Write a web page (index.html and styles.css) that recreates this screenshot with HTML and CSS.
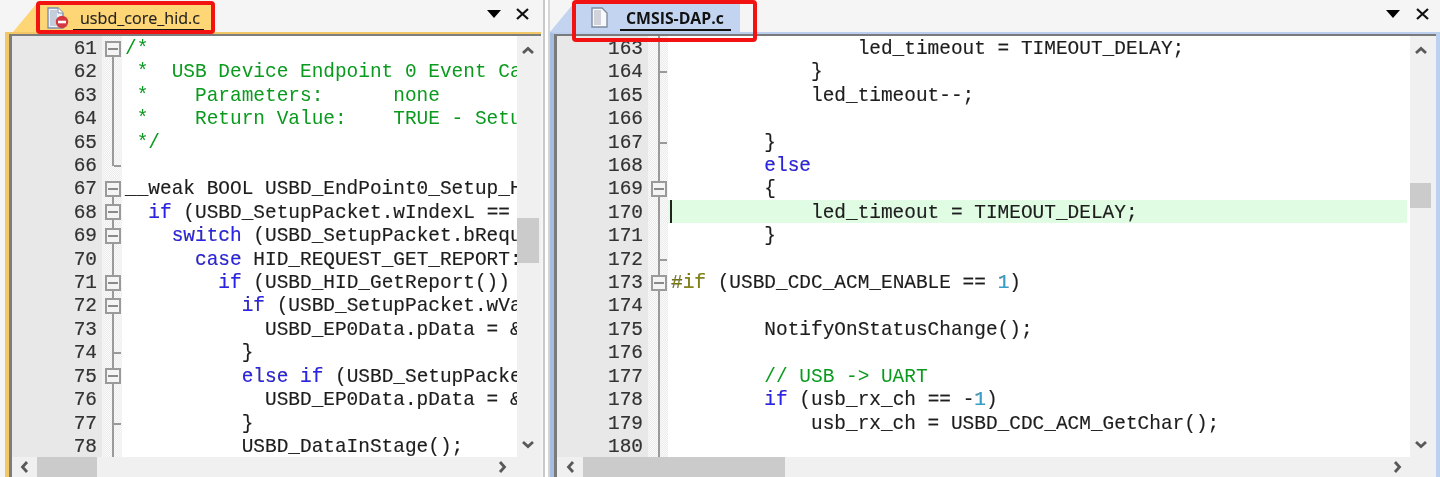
FILE: index.html
```html
<!DOCTYPE html>
<html lang="en">
<head>
<meta charset="utf-8">
<title>Keil editor panes</title>
<link rel="stylesheet" href="styles.css">
</head>
<body>
<div class="app">
  <section class="pane pane-left">
    <header class="strip">
      <div class="tab tab-left">
        <svg class="file-icon" width="22" height="22" viewBox="0 0 22 22"><path d="M1 1h10l5 5v15H1z" fill="#eef1f6" stroke="#7f8fae" stroke-width="1.4"/><path d="M3 3h7v16H3z" fill="#c6cdda"/><path d="M11 1v5h5" fill="#fff" stroke="#7f8fae"/><circle cx="15" cy="15" r="6.2" fill="#d4373f"/><rect x="11" y="13.7" width="8" height="2.6" fill="#fff"/></svg>
        <span class="tab-name">usbd_core_hid.c</span>
      </div>
      <div class="tools">
        <svg class="tool-down" width="14" height="8" viewBox="0 0 14 8"><path d="M0 0h14L7 8z" fill="#000"/></svg>
        <svg class="tool-x" width="13" height="12" viewBox="0 0 13 12"><path d="M1 1l11 10M12 1L1 11" stroke="#111" stroke-width="2.2" fill="none"/></svg>
      </div>
    </header>
    <div class="frame frame-left">
      <div class="body">
        <div class="editor">
          <div class="row"><span class="num">61</span><span class="fold box first"></span><code class="c g">/*</code></div>
          <div class="row"><span class="num">62</span><span class="fold line"></span><code class="c g"> *  USB Device Endpoint 0 Event Callback</code></div>
          <div class="row"><span class="num">63</span><span class="fold line"></span><code class="c g"> *    Parameters:      none</code></div>
          <div class="row"><span class="num">64</span><span class="fold line"></span><code class="c g"> *    Return Value:    TRUE - Setup</code></div>
          <div class="row"><span class="num">65</span><span class="fold line"></span><code class="c g"> */</code></div>
          <div class="row"><span class="num">66</span><span class="fold end"></span><code class="c"></code></div>
          <div class="row"><span class="num">67</span><span class="fold box first"></span><code class="c">__weak BOOL USBD_EndPoint0_Setup_HID</code></div>
          <div class="row"><span class="num">68</span><span class="fold box"></span><code class="c">  <b>if</b> (USBD_SetupPacket.wIndexL == x</code></div>
          <div class="row"><span class="num">69</span><span class="fold box"></span><code class="c">    <b>switch</b> (USBD_SetupPacket.bRequest</code></div>
          <div class="row"><span class="num">70</span><span class="fold line"></span><code class="c">      <b>case</b> HID_REQUEST_GET_REPORT:</code></div>
          <div class="row"><span class="num">71</span><span class="fold box"></span><code class="c">        <b>if</b> (USBD_HID_GetReport()) {</code></div>
          <div class="row"><span class="num">72</span><span class="fold box"></span><code class="c">          <b>if</b> (USBD_SetupPacket.wValue</code></div>
          <div class="row"><span class="num">73</span><span class="fold line"></span><code class="c">            USBD_EP0Data.pData = &amp;</code></div>
          <div class="row"><span class="num">74</span><span class="fold tick"></span><code class="c">          }</code></div>
          <div class="row"><span class="num">75</span><span class="fold box"></span><code class="c">          <b>else if</b> (USBD_SetupPacket.w</code></div>
          <div class="row"><span class="num">76</span><span class="fold line"></span><code class="c">            USBD_EP0Data.pData = &amp;</code></div>
          <div class="row"><span class="num">77</span><span class="fold tick"></span><code class="c">          }</code></div>
          <div class="row"><span class="num">78</span><span class="fold line"></span><code class="c">          USBD_DataInStage();</code></div>
        </div>
        <div class="vbar vbar-left">
          <svg class="chev" width="14" height="9" viewBox="0 0 14 9"><path d="M2 7l5-4.5L12 7" stroke="#595959" stroke-width="2.8" fill="none"/></svg>
          <div class="vtrack"><div class="vthumb vthumb-left"></div></div>
          <svg class="chev" width="14" height="9" viewBox="0 0 14 9"><path d="M2 2l5 4.5L12 2" stroke="#595959" stroke-width="2.8" fill="none"/></svg>
        </div>
      </div>
      <div class="hbar hbar-left">
        <svg class="chev-h" width="9" height="14" viewBox="0 0 9 14"><path d="M7 2L2.5 7 7 12" stroke="#595959" stroke-width="2.8" fill="none"/></svg>
        <div class="htrack"><div class="hthumb hthumb-left"></div></div>
        <svg class="chev-h" width="9" height="14" viewBox="0 0 9 14"><path d="M2 2l4.5 5L2 12" stroke="#595959" stroke-width="2.8" fill="none"/></svg>
      </div>
    </div>
    <div class="mark mark-left"></div>
  </section>

  <section class="pane pane-right">
    <header class="strip">
      <div class="tab tab-right">
        <svg class="file-icon" width="18" height="21" viewBox="0 0 18 21"><path d="M1 1h10l5 5v14H1z" fill="#f8f9fb" stroke="#7f8ca3" stroke-width="1.4"/><path d="M3 3h7v15H3z" fill="#d0d4da"/></svg>
        <span class="tab-name tab-name-active">CMSIS-DAP.c</span>
      </div>
      <div class="tools">
        <svg class="tool-down" width="14" height="8" viewBox="0 0 14 8"><path d="M0 0h14L7 8z" fill="#000"/></svg>
        <svg class="tool-x" width="13" height="12" viewBox="0 0 13 12"><path d="M1 1l11 10M12 1L1 11" stroke="#111" stroke-width="2.2" fill="none"/></svg>
      </div>
    </header>
    <div class="frame frame-right">
      <div class="body">
        <div class="editor">
          <div class="row"><span class="num">163</span><span class="fold line"></span><code class="c">                led_timeout = TIMEOUT_DELAY;</code></div>
          <div class="row"><span class="num">164</span><span class="fold tick"></span><code class="c">            }</code></div>
          <div class="row"><span class="num">165</span><span class="fold line"></span><code class="c">            led_timeout--;</code></div>
          <div class="row"><span class="num">166</span><span class="fold line"></span><code class="c"></code></div>
          <div class="row"><span class="num">167</span><span class="fold tick"></span><code class="c">        }</code></div>
          <div class="row"><span class="num">168</span><span class="fold line"></span><code class="c">        <b>else</b></code></div>
          <div class="row"><span class="num">169</span><span class="fold box"></span><code class="c">        {</code></div>
          <div class="row row-current"><span class="num">170</span><span class="fold line"></span><code class="c">            led_timeout = TIMEOUT_DELAY;</code></div>
          <div class="row"><span class="num">171</span><span class="fold line"></span><code class="c">        }</code></div>
          <div class="row"><span class="num">172</span><span class="fold tick"></span><code class="c"></code></div>
          <div class="row"><span class="num">173</span><span class="fold box"></span><code class="c"><i>#if</i> (USBD_CDC_ACM_ENABLE == <u>1</u>)</code></div>
          <div class="row"><span class="num">174</span><span class="fold line"></span><code class="c"></code></div>
          <div class="row"><span class="num">175</span><span class="fold line"></span><code class="c">        NotifyOnStatusChange();</code></div>
          <div class="row"><span class="num">176</span><span class="fold line"></span><code class="c"></code></div>
          <div class="row"><span class="num">177</span><span class="fold line"></span><code class="c g">        // USB -&gt; UART</code></div>
          <div class="row"><span class="num">178</span><span class="fold line"></span><code class="c">        <b>if</b> (usb_rx_ch == -<u>1</u>)</code></div>
          <div class="row"><span class="num">179</span><span class="fold line"></span><code class="c">            usb_rx_ch = USBD_CDC_ACM_GetChar();</code></div>
          <div class="row"><span class="num">180</span><span class="fold line"></span><code class="c"></code></div>
        </div>
        <div class="vbar vbar-right">
          <svg class="chev" width="14" height="9" viewBox="0 0 14 9"><path d="M2 7l5-4.5L12 7" stroke="#595959" stroke-width="2.8" fill="none"/></svg>
          <div class="vtrack"><div class="vthumb vthumb-right"></div></div>
          <svg class="chev" width="14" height="9" viewBox="0 0 14 9"><path d="M2 2l5 4.5L12 2" stroke="#595959" stroke-width="2.8" fill="none"/></svg>
        </div>
      </div>
      <div class="hbar hbar-right">
        <svg class="chev-h" width="9" height="14" viewBox="0 0 9 14"><path d="M7 2L2.5 7 7 12" stroke="#595959" stroke-width="2.8" fill="none"/></svg>
        <div class="htrack"><div class="hthumb hthumb-right"></div></div>
        <svg class="chev-h" width="9" height="14" viewBox="0 0 9 14"><path d="M2 2l4.5 5L2 12" stroke="#595959" stroke-width="2.8" fill="none"/></svg>
      </div>
    </div>
    <div class="mark mark-right"></div>
  </section>
</div>
</body>
</html>
```
FILE: styles.css
```css
*, *::before, *::after { box-sizing: border-box; }
html, body { margin: 0; height: 100%; overflow: hidden; background: #fff; }
.app { display: flex; height: 477px; width: 1440px; filter: blur(0.5px); }

.pane { position: relative; display: flex; flex-direction: column; height: 477px; background: #f5f5f5; }
.pane-left { width: 545px; border-right: 2px solid #c9c9c9; }
.pane-right { margin-left: 3px; border-left: 2px solid #d5d5d5; flex: 1; min-width: 0; }

.strip { height: 32px; flex: none; display: flex; justify-content: space-between; align-items: flex-end; }
.tab { height: 29px; display: flex; align-items: center; clip-path: polygon(0 100%, 24px 0, 100% 0, 100% 100%); font-family: "Open Sans", "Noto Sans", sans-serif; }
.tab-left { width: 202px; margin-left: 13px; background: #ffd675; padding-left: 34px; }
.tab-right { width: 190px; background: #c3d4f1; padding-left: 41px; }
.file-icon { flex: none; }
.tab-name { font-size: 16.1px; color: #222; margin-left: 4px; border-bottom: 2px solid #111; line-height: 22px; padding: 0 4px 0 7px; position: relative; top: 1px; -webkit-text-stroke: 0.15px #222; }
.tab-name-active { font-weight: 700; color: #111; margin-left: 11px; font-size: 15.8px; padding: 0 7px 0 6px; -webkit-text-stroke: 0; }

.tools { display: flex; align-items: center; gap: 15px; height: 32px; padding-bottom: 4px; }
.pane-left .tools { padding-right: 14px; }
.pane-right .tools { padding-right: 11px; gap: 16px; }
.tool-down, .tool-x { display: block; }

.frame { flex: 1; min-height: 0; display: flex; flex-direction: column; border-top: 2px solid; border-left: 4px solid; padding: 2px 0 0 3px; background: #f0f0f0; }
.frame-left { margin-left: 5px; margin-right: 2px; border-top-color: #f2c766; border-left-color: #f2c766; box-shadow: inset 3px 2px 0 #7d7d7d; }
.frame-right { border-top-color: #bccfef; border-left-color: #a6bde0; border-right: 4px solid #bcd0f0; box-shadow: inset 3px 2px 0 #7a7a7a; }

.body { flex: 1; min-height: 0; display: flex; }
.editor { flex: 1; min-width: 0; overflow: hidden; background: #fff; }
.row { display: flex; height: 23.41px; font: 19.45px/27.41px "Liberation Mono", monospace; color: #1d1d1d; white-space: pre; -webkit-text-stroke: 0.15px #1d1d1d; }
.num { flex: none; height: 23.41px; background: #e8e8e8; text-align: right; color: #333; }
.pane-left .num { width: 90px; padding-right: 5px; }
.pane-right .num { width: 91px; padding-right: 5px; }
.fold { flex: none; position: relative; width: 20px; height: 23.41px; background-color: #fafafa; background-image: repeating-conic-gradient(#ececec 0 25%, #fafafa 0 50%); background-size: 2px 2px; }
.c { flex: 1; min-width: 0; overflow: hidden; padding-left: 3px; font: inherit; }
.g { color: #0a9a1e; -webkit-text-stroke: 0; }
.c b { font-weight: 400; color: #2a22f0; }
.c i { font-style: normal; color: #8a8a10; }
.c u { text-decoration: none; color: #3a9fc8; }

.fold.line::before, .fold.tick::before, .fold.end::before, .fold.box::before { content: ""; position: absolute; left: 10px; top: 0; bottom: 0; width: 2px; background: #9a9a9a; }
.fold.tick::after, .fold.end::after { content: ""; position: absolute; left: 12px; top: 12px; width: 7px; height: 2px; background: #9a9a9a; }
.fold.end::before { bottom: 10px; }
.fold.first::before { top: 12px; }
.fold.box::after { content: ""; position: absolute; left: 3px; top: 4.5px; width: 16px; height: 16px; border: 2px solid #9a9a9a; background: linear-gradient(#8a8a8a, #8a8a8a) center / 10px 2px no-repeat, #f4f4f4; }

.row-current .c { background: #e0fde4; position: relative; margin-right: 3px; }
.row-current .c::before { content: ""; position: absolute; left: 2px; top: 0; bottom: 0; width: 2px; background: #222; }

.vbar { flex: none; display: flex; flex-direction: column; align-items: center; background: #f0f0f0; padding-top: 10px; padding-bottom: 8px; }
.vbar-left { width: 24px; padding-right: 2px; }
.vbar-right { width: 26px; padding-right: 5px; }
.chev { flex: none; }
.vtrack { flex: 1; width: 100%; }
.vthumb { background: #cbcbcb; width: 100%; }
.vthumb-left { margin-top: 163px; height: 45px; }
.vthumb-right { margin-top: 128px; height: 25px; }

.hbar { flex: none; height: 20px; display: flex; align-items: center; background: #f0f0f0; padding-right: 34px; }
.hbar-left { padding-left: 8px; }
.hbar-right { padding-left: 9px; }
.chev-h { flex: none; }
.htrack { flex: 1; align-self: stretch; padding-left: 8px; }
.hthumb { height: 100%; background: #cbcbcb; }
.hthumb-left { width: 60px; }
.hthumb-right { width: 202px; }

.mark { position: absolute; border: 4px solid #f31212; border-radius: 4px; pointer-events: none; }
.mark-left { left: 36px; top: 1px; width: 179px; height: 33px; }
.mark-right { left: 22px; top: 0; width: 185px; height: 42px; }
```
